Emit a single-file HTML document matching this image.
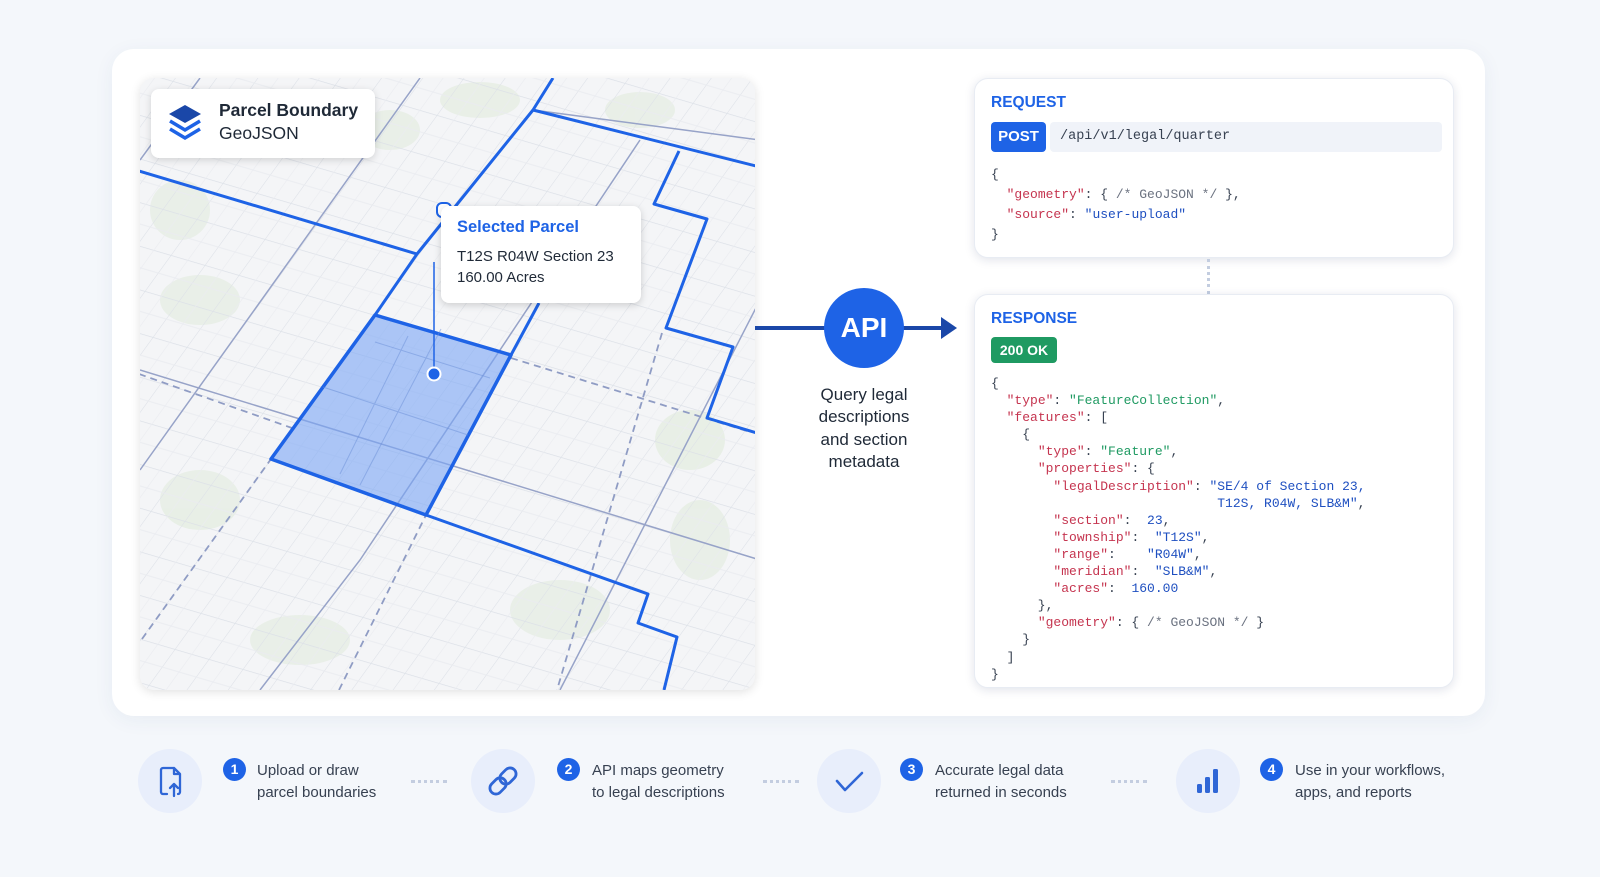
<!DOCTYPE html>
<html><head><meta charset="utf-8"><style>
*{margin:0;padding:0;box-sizing:border-box}
body{width:1600px;height:877px;background:#f4f7fb;font-family:"Liberation Sans",sans-serif;position:relative;overflow:hidden;color:#1f2937}
.card{position:absolute;left:112px;top:49px;width:1373px;height:667px;background:#fff;border-radius:22px;box-shadow:0 4px 20px rgba(30,60,120,.06)}
.map{position:absolute;left:140px;top:78px;width:615px;height:612px;border-radius:14px;overflow:hidden;box-shadow:0 2px 10px rgba(0,0,0,.12);background:#f4f5f7}
.abs{position:absolute}
.panel{position:absolute;left:974px;width:480px;background:#fff;border-radius:14px;box-shadow:0 2px 10px rgba(20,40,90,.13);border:1px solid #e8ecf3}
.lbl{position:absolute;left:16px;font-weight:bold;color:#1e63e6;font-size:15.5px}
pre{position:absolute;left:16px;font-family:"Liberation Mono",monospace;font-size:13px;color:#374151}
.k{color:#c5344f}.s{color:#1e4fc0}.g{color:#1f9a62}.c{color:#6b7280}
.ic{position:absolute;width:64px;height:64px;border-radius:50%;background:#e8eefb;top:749px}
.num{position:absolute;width:23px;height:23px;border-radius:50%;background:#1e63e6;color:#fff;font-weight:bold;font-size:14px;text-align:center;line-height:23px;top:758px}
.tx{position:absolute;top:760px;font-size:15px;line-height:21.5px;color:#374151}
.dots{position:absolute;top:780px;width:36px;border-top:3px dotted #c3cde0}
</style></head><body>
<div class="card"></div>
<div class="map">
<svg width="615" height="612" viewBox="140 78 615 612" style="position:absolute;left:0;top:0">
<defs>
<pattern id="gr" width="100" height="100" patternUnits="userSpaceOnUse" patternTransform="matrix(0.34,0.1,-0.26,0.36,375,315)">
<path d="M0 0H100M0 0V100" stroke="#dce0e7" stroke-width="3.2" fill="none"/>
<path d="M0 50H100M50 0V100" stroke="#eaecf0" stroke-width="2" fill="none"/>
</pattern>
</defs>
<rect x="140" y="78" width="615" height="612" fill="#f4f5f7"/>
<g fill="#e6eee3" opacity=".8">
<ellipse cx="480" cy="100" rx="40" ry="18"/><ellipse cx="390" cy="130" rx="30" ry="20"/>
<ellipse cx="200" cy="300" rx="40" ry="25"/><ellipse cx="690" cy="440" rx="35" ry="30"/>
<ellipse cx="200" cy="500" rx="40" ry="30"/><ellipse cx="560" cy="610" rx="50" ry="30"/>
<ellipse cx="300" cy="640" rx="50" ry="25"/><ellipse cx="640" cy="110" rx="35" ry="18"/>
<ellipse cx="180" cy="210" rx="30" ry="30"/><ellipse cx="700" cy="540" rx="30" ry="40"/>
</g>
<rect x="140" y="78" width="615" height="612" fill="url(#gr)"/>
<g stroke="#97a3c8" stroke-width="1.5" fill="none">
<path d="M139 171 L417 254"/><path d="M140 370 L760 560"/>
<path d="M200 78 L140 160"/><path d="M420 78 L140 470"/><path d="M640 140 L360 560 L260 690"/>
<path d="M760 300 L560 690"/><path d="M533 110 L760 140"/>
</g>
<g stroke="#8f9cc4" stroke-width="1.8" fill="none" stroke-dasharray="7 5">
<path d="M139 374 L292 428"/><path d="M511 358 L750 432"/>
<path d="M662 333 L557 690"/><path d="M142 639 L271 459"/><path d="M339 690 L426 515"/>
</g>
<polygon points="375,315 511,355 426,515 271,459" fill="#7aa5f5" fill-opacity=".6" stroke="#1e63e6" stroke-width="3.5" stroke-linejoin="round"/>
<path d="M375 342 L490 378 M441 329 L360 485 M323 387 L468 435 M408 336 L340 474" stroke="#6b90d8" stroke-width="1" opacity=".5" fill="none"/>
<g stroke="#1e63e6" stroke-width="3" fill="none" stroke-linejoin="round">
<path d="M139 171 L417 254"/>
<path d="M375 315 L417 254 L533 110 L553 78"/>
<path d="M533 110 L760 167"/>
<path d="M679 151 L654 204 L707 219 L666 328 L733 347 L707 418 L760 434"/>
<path d="M511 355 L539 303"/>
<path d="M426 515 L648 594 L638 623 L677 637 L664 690"/>
</g>
<line x1="434" y1="262" x2="434" y2="374" stroke="#1e63e6" stroke-width="1.5"/>
<circle cx="434" cy="374" r="6.5" fill="#1e63e6" stroke="#fff" stroke-width="2"/>
<rect x="437" y="203" width="14" height="14" rx="5" fill="#fff" stroke="#1e63e6" stroke-width="2"/>
</svg>
<div class="abs" style="left:11px;top:11px;width:224px;height:69px;background:#fff;border-radius:8px;box-shadow:0 2px 8px rgba(0,0,0,.15)">
<svg class="abs" style="left:16px;top:14px" width="36" height="40" viewBox="0 0 36 40">
<polygon points="18,2 34,11 18,20 2,11" fill="#1a47a8"/>
<path d="M3 18 L18 27 L33 18" stroke="#1e63e6" stroke-width="3.5" fill="none"/>
<path d="M3 26 L18 35 L33 26" stroke="#1e63e6" stroke-width="3.5" fill="none"/>
</svg>
<div class="abs" style="left:68px;top:10px;font-size:17.5px;line-height:23px;color:#1f2937"><b>Parcel Boundary</b><br>GeoJSON</div>
</div>
<div class="abs" style="left:301px;top:128px;width:200px;height:97px;background:#fff;border-radius:8px;box-shadow:0 2px 8px rgba(0,0,0,.17)">
<div class="abs" style="left:16px;top:12px;font-size:16.5px;font-weight:bold;color:#1e63e6">Selected Parcel</div>
<div class="abs" style="left:16px;top:41px;font-size:15px;line-height:20.5px;color:#1f2937">T12S R04W Section 23<br>160.00 Acres</div>
</div>
</div>

<svg class="abs" style="left:755px;top:283px" width="210" height="90">
<line x1="0" y1="45" x2="195" y2="45" stroke="#1a47a8" stroke-width="4"/>
<polygon points="186,34 202,45 186,56" fill="#1a47a8"/>
<circle cx="109" cy="45" r="40" fill="#1e63e6"/>
</svg>
<div class="abs" style="left:824px;top:312px;width:80px;text-align:center;color:#fff;font-size:28px;font-weight:bold">API</div>
<div class="abs" style="left:794px;top:384px;width:140px;text-align:center;font-size:17px;line-height:22.3px;color:#1f2937">Query legal<br>descriptions<br>and section<br>metadata</div>

<div class="panel" style="top:78px;height:180px">
<div class="lbl" style="top:15px">REQUEST</div>
<div class="abs" style="left:16px;top:43px;width:55px;height:30px;background:#1e63e6;border-radius:4px;color:#fff;font-weight:bold;font-size:15px;text-align:center;line-height:30px">POST</div>
<div class="abs" style="left:75px;top:43px;width:392px;height:30px;background:#f0f3f9;border-radius:4px;font-family:'Liberation Mono',monospace;font-size:13.5px;line-height:30px;padding-left:10px;color:#374151">/api/v1/legal/quarter</div>
<pre style="top:86px;line-height:20px">{
  <span class="k">"geometry"</span>: { <span class="c">/* GeoJSON */</span> },
  <span class="k">"source"</span>: <span class="s">"user-upload"</span>
}</pre>
</div>
<div class="abs" style="left:1207px;top:259px;height:35px;border-left:3px dotted #c3cde0"></div>
<div class="panel" style="top:294px;height:394px">
<div class="lbl" style="top:15px">RESPONSE</div>
<div class="abs" style="left:16px;top:42px;width:66px;height:26px;background:#1f9a62;border-radius:4px;color:#fff;font-weight:bold;font-size:14px;text-align:center;line-height:26px">200 OK</div>
<pre style="top:80px;line-height:17.1px">{
  <span class="k">"type"</span>: <span class="g">"FeatureCollection"</span>,
  <span class="k">"features"</span>: [
    {
      <span class="k">"type"</span>: <span class="g">"Feature"</span>,
      <span class="k">"properties"</span>: {
        <span class="k">"legalDescription"</span>: <span class="s">"SE/4 of Section 23,
                             T12S, R04W, SLB&amp;M"</span>,
        <span class="k">"section"</span>:  <span class="s">23</span>,
        <span class="k">"township"</span>:  <span class="s">"T12S"</span>,
        <span class="k">"range"</span>:    <span class="s">"R04W"</span>,
        <span class="k">"meridian"</span>:  <span class="s">"SLB&amp;M"</span>,
        <span class="k">"acres"</span>:  <span class="s">160.00</span>
      },
      <span class="k">"geometry"</span>: { <span class="c">/* GeoJSON */</span> }
    }
  ]
}</pre>
</div>

<div class="ic" style="left:138px"><svg width="64" height="64" viewBox="0 0 64 64"><path d="M36 19 H25 a2 2 0 0 0 -2 2 V43 a2 2 0 0 0 2 2 h4 M36 19 L42 25 V43 a2 2 0 0 1 -2 2 M36 19 V25 H42 M36 47 V35 M32 39 L36 35 L40 39" stroke="#2f66d6" stroke-width="2.3" fill="none" stroke-linecap="round" stroke-linejoin="round"/></svg></div>
<div class="num" style="left:223px">1</div>
<div class="tx" style="left:257px">Upload or draw<br>parcel boundaries</div>
<div class="dots" style="left:411px"></div>
<div class="ic" style="left:471px"><svg width="64" height="64" viewBox="0 0 64 64"><g transform="rotate(-45 32 32)" stroke="#2f66d6" stroke-width="2.8" fill="none"><rect x="16" y="26" width="18" height="12" rx="6"/><rect x="30" y="26" width="18" height="12" rx="6"/></g></svg></div>
<div class="num" style="left:557px">2</div>
<div class="tx" style="left:592px">API maps geometry<br>to legal descriptions</div>
<div class="dots" style="left:763px"></div>
<div class="ic" style="left:817px"><svg width="64" height="64" viewBox="0 0 64 64"><path d="M20 32 L28 41 L45 24" stroke="#2f66d6" stroke-width="2.6" fill="none" stroke-linecap="round" stroke-linejoin="round"/></svg></div>
<div class="num" style="left:900px">3</div>
<div class="tx" style="left:935px">Accurate legal data<br>returned in seconds</div>
<div class="dots" style="left:1111px"></div>
<div class="ic" style="left:1176px"><svg width="64" height="64" viewBox="0 0 64 64"><g fill="#2f66d6"><rect x="21" y="35" width="5" height="9" rx="1.5"/><rect x="29" y="28" width="5" height="16" rx="1.5"/><rect x="37" y="20" width="5" height="24" rx="1.5"/></g></svg></div>
<div class="num" style="left:1260px">4</div>
<div class="tx" style="left:1295px">Use in your workflows,<br>apps, and reports</div>
</body></html>
